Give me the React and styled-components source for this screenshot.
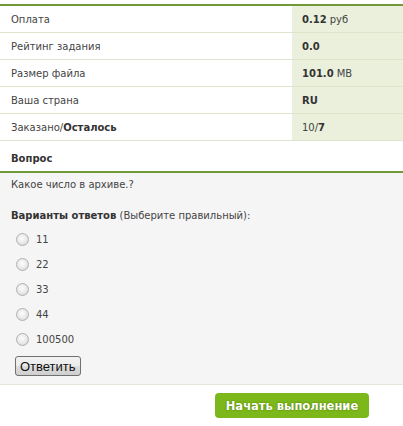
import React from 'react';
import styled, { createGlobalStyle } from 'styled-components';

const GlobalStyle = createGlobalStyle`
  body {
    margin: 0;
    background: #fff;
    font-family: 'DejaVu Sans', Verdana, sans-serif;
    font-size: 10px;
    color: #444;
  }
`;

// 전체 래퍼
const Page = styled.div`
  width: 403px;
  padding-top: 4px;
`;

const InfoTable = styled.div`
  border-top: 2px solid #6f9a37;
`;

const InfoRow = styled.div`
  display: grid;
  grid-template-columns: 292px 1fr;
  height: 26px;
  border-bottom: 1px solid #dfe5cc;
`;

const Label = styled.div`
  display: flex;
  align-items: center;
  padding-left: 11px;
  b {
    color: #333;
  }
`;

const Value = styled.div`
  display: flex;
  align-items: center;
  padding-left: 10px;
  background: #ebf0dc;
  b {
    color: #333;
  }
`;

const Unit = styled.span`
  margin-left: 3px;
`;

const QuestionHead = styled.div`
  box-sizing: border-box;
  height: 32px;
  display: flex;
  align-items: center;
  padding: 4px 0 0 11px;
  font-weight: bold;
  color: #333;
  border-bottom: 2px solid #6f9a37;
`;

const QuestionBox = styled.div`
  background: #f5f5f5;
  padding: 5px 11px 8px;
  border-bottom: 1px solid #e3e6d8;
`;

const QuestionText = styled.div`
  line-height: 14px;
`;

const OptionsTitle = styled.div`
  margin-top: 17px;
  line-height: 14px;
  b {
    color: #333;
  }
`;

const OptionList = styled.div`
  display: flex;
  flex-direction: column;
  gap: 11px;
  margin-top: 9px;
  padding-left: 5px;
`;

const Option = styled.label`
  display: flex;
  align-items: center;
  height: 14px;
  gap: 7px;
`;

const Radio = styled.span`
  width: 13px;
  height: 13px;
  border-radius: 50%;
  border: 1px solid #b0b0b0;
  background: radial-gradient(circle at 45% 40%, #fdfdfd 0%, #e8e8e8 55%, #cdcdcd 100%);
  box-sizing: border-box;
`;

const AnswerBtn = styled.button`
  margin-top: 10px;
  margin-left: 4px;
  height: 20px;
  padding: 0 4px;
  font-family: 'Liberation Sans', Arial, sans-serif;
  font-size: 13px;
  color: #111;
  border: 1px solid #707070;
  border-radius: 3px;
  background: linear-gradient(#f2f2f2 0%, #ebebeb 50%, #dddddd 51%, #cfcfcf 100%);
`;

const Footer = styled.div`
  display: flex;
  padding: 8px 0 0 215px;
`;

const StartBtn = styled.button`
  width: 154px;
  height: 25px;
  border: none;
  border-radius: 4px;
  background: #7cb819;
  color: #fff;
  font-family: 'DejaVu Sans', Verdana, sans-serif;
  font-size: 11.5px;
  font-weight: bold;
  text-shadow: 0 0 2px #4a7506;
`;

const rows = [
  { label: 'Оплата', value: <><b>0.12</b><Unit>руб</Unit></> },
  { label: 'Рейтинг задания', value: <b>0.0</b> },
  { label: 'Размер файла', value: <><b>101.0</b><Unit>MB</Unit></> },
  { label: 'Ваша страна', value: <b>RU</b> },
  { label: <>Заказано/<b>Осталось</b></>, value: <>10/<b>7</b></> },
];

const answers = ['11', '22', '33', '44', '100500'];

export default function App() {
  return (
    <Page>
      <GlobalStyle />
      <InfoTable>
        {rows.map((r, i) => (
          <InfoRow key={i}>
            <Label>{r.label}</Label>
            <Value>{r.value}</Value>
          </InfoRow>
        ))}
      </InfoTable>
      <QuestionHead>Вопрос</QuestionHead>
      <QuestionBox>
        <QuestionText>Какое число в архиве.?</QuestionText>
        <OptionsTitle>
          <b>Варианты ответов</b> (Выберите правильный):
        </OptionsTitle>
        <OptionList>
          {answers.map(a => (
            <Option key={a}>
              <Radio />
              {a}
            </Option>
          ))}
        </OptionList>
        <AnswerBtn>Ответить</AnswerBtn>
      </QuestionBox>
      <Footer>
        <StartBtn>Начать выполнение</StartBtn>
      </Footer>
    </Page>
  );
}
